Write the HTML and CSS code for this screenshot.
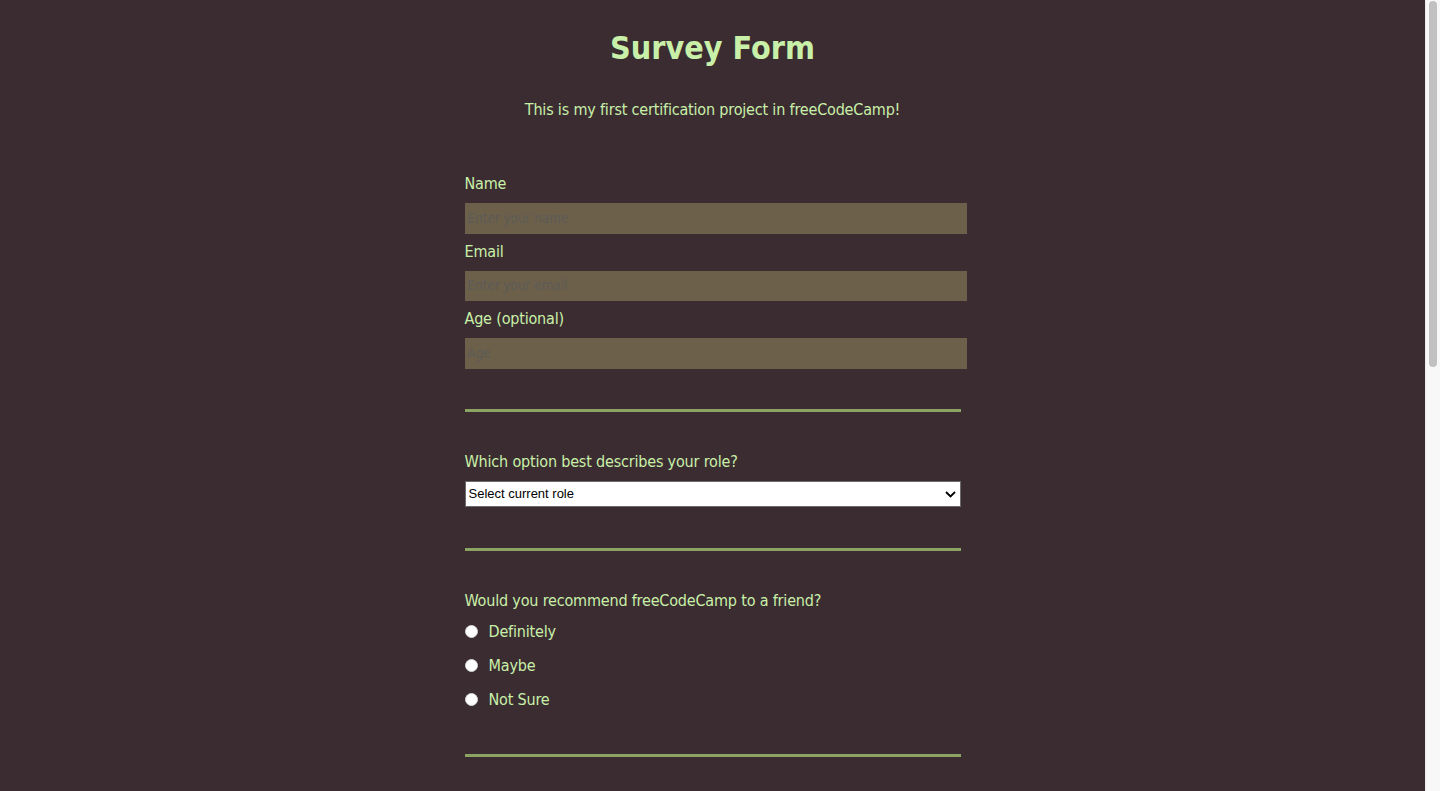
FILE: index.html
```html
<!DOCTYPE html>
<html lang="en">
<head>
<meta charset="utf-8">
<title>Survey Form</title>
<link rel="stylesheet" href="styles.css">
</head>
<body>
<div class="page">
  <main class="main">
    <header class="header">
      <h1 id="title" class="title">Survey Form</h1>
      <p id="description" class="description">This is my first certification project in freeCodeCamp!</p>
    </header>
    <form id="survey-form" class="form">
      <section class="section">
        <div class="group">
          <label id="name-label" for="name" class="label">Name</label>
          <input id="name" type="text" class="field" placeholder="Enter your name">
        </div>
        <div class="group">
          <label id="email-label" for="email" class="label">Email</label>
          <input id="email" type="email" class="field" placeholder="Enter your email">
        </div>
        <div class="group">
          <label id="number-label" for="number" class="label">Age (optional)</label>
          <input id="number" type="number" class="field" placeholder="Age">
        </div>
      </section>
      <hr class="rule">
      <section class="section">
        <label for="dropdown" class="label">Which option best describes your role?</label>
        <div class="select-wrap">
          <select id="dropdown" class="select">
            <option>Select current role</option>
            <option>Student</option>
            <option>Full Time Job</option>
            <option>Full Time Learner</option>
            <option>Prefer not to say</option>
            <option>Other</option>
          </select>
          <svg class="chevron" width="11" height="7" viewBox="0 0 11 7"><path d="M1 1 L5.5 5.5 L10 1" fill="none" stroke="#000" stroke-width="1.8"/></svg>
        </div>
      </section>
      <hr class="rule rule-b">
      <section class="section">
        <p class="label">Would you recommend freeCodeCamp to a friend?</p>
        <label class="choice"><input type="radio" name="recommend" class="radio" value="definitely">Definitely</label>
        <label class="choice"><input type="radio" name="recommend" class="radio" value="maybe">Maybe</label>
        <label class="choice"><input type="radio" name="recommend" class="radio" value="not-sure">Not Sure</label>
      </section>
      <hr class="rule rule-c">
    </form>
  </main>
  <div class="scrollbar" aria-hidden="true">
    <div class="thumb"></div>
  </div>
</div>
</body>
</html>
```
FILE: styles.css
```css
html {
  background: #3b2c31;
  overflow: hidden;
}

body {
  margin: 0;
  background: #3b2c31;
  color: #c9f0a9;
  font-family: "DejaVu Sans Condensed", "Liberation Sans", sans-serif;
  font-size: 16px;
}

.page {
  display: flex;
  height: 100vh;
  overflow: hidden;
}

.main {
  flex: 1;
  min-width: 0;
}

.scrollbar {
  box-sizing: border-box;
  width: 15px;
  flex: none;
  background: #f8f8f8;
  border-left: 1px solid #ebebeb;
  padding: 1px 3px 0 3px;
}

.thumb {
  height: 366px;
  border-radius: 4px;
  background: #c1c1c1;
}

.header {
  text-align: center;
  padding-top: 28px;
}

.title {
  margin: 0;
  font-size: 32px;
  line-height: 40px;
  font-weight: bold;
}

.description {
  margin: 32px 0 0;
  line-height: 20px;
  letter-spacing: -0.18px;
}

.form {
  width: 496px;
  margin: 54px auto 0;
  letter-spacing: -0.18px;
}

.section {
  display: flex;
  flex-direction: column;
}

.group {
  display: flex;
  flex-direction: column;
}

.group + .group {
  margin-top: 8px;
}

.label {
  display: block;
  margin: 0 0 9px;
  line-height: 20px;
}

.field {
  box-sizing: content-box;
  width: 100%;
  height: 30.5px;
  padding: 0 3px;
  margin: 0;
  border: none;
  background: #6d604b;
  color: #222;
  font-family: inherit;
  font-size: 13.33px;
  letter-spacing: 0;
  outline: none;
}

.field::placeholder {
  color: #5c5b55;
}

.rule {
  border: none;
  height: 3px;
  background: #8ba464;
  margin: 40px 0;
}

.rule-b {
  margin-top: 41px;
}

.rule-c {
  margin: 37px 0 0;
}

.select-wrap {
  position: relative;
}

.select {
  appearance: none;
  -webkit-appearance: none;
  box-sizing: border-box;
  width: 100%;
  height: 26px;
  margin: 0;
  padding: 0 20px 0 3px;
  border: 1px solid #6b6b6b;
  border-radius: 0;
  background: #fff;
  color: #000;
  font-family: "Liberation Sans", Arial, sans-serif;
  font-size: 13px;
  letter-spacing: 0;
}

.chevron {
  position: absolute;
  right: 5px;
  top: 10px;
  pointer-events: none;
}

.choice {
  display: flex;
  align-items: center;
  height: 34px;
  line-height: 20px;
}

.section .label + .choice {
  margin-top: -5px;
}

.radio {
  appearance: none;
  -webkit-appearance: none;
  box-sizing: border-box;
  flex: none;
  width: 13px;
  height: 13px;
  margin: 0 11px 0 0;
  border-radius: 50%;
  border: 1px solid #d6d6d6;
  background: #fff;
}
```
